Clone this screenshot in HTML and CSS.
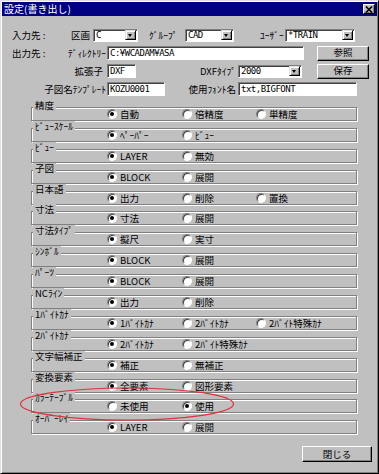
FILE: index.html
```html
<!DOCTYPE html>
<html lang="ja">

<head>
	<meta charset="UTF-8">
	<meta name="viewport" content="width=device-width, initial-scale=1.0">
	<title>設定(書き出し)</title>
	<link rel="stylesheet" href="styles.css">
</head>

<body>
	<div class="dialog">
		<div class="titlebar">
			<span class="title">設定(書き出し)</span>
			<span class="close">
				<svg width="8" height="7" viewBox="0 0 8 7"><path d="M1 0.5 L7 6.5 M7 0.5 L1 6.5" stroke="#000" stroke-width="1.6"/></svg>
			</span>
		</div>

		<div class="form">
			<div class="row">
				<span class="lead">入力先 :</span>
				<span class="lab lab-area">区画</span>
				<span class="combo combo-area"><span class="val">C</span><span class="drop"></span></span>
				<span class="lab lab-group">ｸﾞﾙｰﾌﾟ</span>
				<span class="combo combo-group"><span class="val">CAD</span><span class="drop"></span></span>
				<span class="lab lab-user">ﾕｰｻﾞｰ</span>
				<span class="combo combo-user"><span class="val">*TRAIN</span><span class="drop"></span></span>
			</div>
			<div class="row">
				<span class="lead lead-out">出力先 :</span>
				<span class="lab lab-dir">ﾃﾞｨﾚｸﾄﾘｰ</span>
				<span class="field field-dir">C:¥WCADAM¥ASA</span>
				<button type="button" class="btn btn-side">参照</button>
			</div>
			<div class="row">
				<span class="lab lab-ext">拡張子</span>
				<span class="field field-ext">DXF</span>
				<span class="lab lab-dxf">DXFﾀｲﾌﾟ</span>
				<span class="combo combo-dxf"><span class="val">2000</span><span class="drop"></span></span>
				<button type="button" class="btn btn-side btn-save">保存</button>
			</div>
			<div class="row">
				<span class="lab lab-tpl">子図名ﾃﾝﾌﾟﾚｰﾄ</span>
				<span class="field field-tpl">KOZU0001</span>
				<span class="lab lab-font">使用ﾌｫﾝﾄ名</span>
				<span class="field field-font">txt,BIGFONT</span>
			</div>
		</div>

		<div class="groups">
			<div class="group">
				<span class="group-title">精度</span>
				<div class="opts">
					<span class="opt"><i class="radio on"></i>自動</span>
					<span class="opt"><i class="radio"></i>倍精度</span>
					<span class="opt"><i class="radio"></i>単精度</span>
				</div>
			</div>
			<div class="group">
				<span class="group-title">ﾋﾞｭｰｽｹｰﾙ</span>
				<div class="opts">
					<span class="opt"><i class="radio on"></i>ﾍﾟｰﾊﾟｰ</span>
					<span class="opt"><i class="radio"></i>ﾋﾞｭｰ</span>
				</div>
			</div>
			<div class="group">
				<span class="group-title">ﾋﾞｭｰ</span>
				<div class="opts">
					<span class="opt"><i class="radio on"></i>LAYER</span>
					<span class="opt"><i class="radio"></i>無効</span>
				</div>
			</div>
			<div class="group">
				<span class="group-title">子図</span>
				<div class="opts">
					<span class="opt"><i class="radio on"></i>BLOCK</span>
					<span class="opt"><i class="radio"></i>展開</span>
				</div>
			</div>
			<div class="group">
				<span class="group-title">日本語</span>
				<div class="opts">
					<span class="opt"><i class="radio on"></i>出力</span>
					<span class="opt"><i class="radio"></i>削除</span>
					<span class="opt"><i class="radio"></i>置換</span>
				</div>
			</div>
			<div class="group">
				<span class="group-title">寸法</span>
				<div class="opts">
					<span class="opt"><i class="radio on"></i>寸法</span>
					<span class="opt"><i class="radio"></i>展開</span>
				</div>
			</div>
			<div class="group">
				<span class="group-title">寸法ﾀｲﾌﾟ</span>
				<div class="opts">
					<span class="opt"><i class="radio on"></i>擬尺</span>
					<span class="opt"><i class="radio"></i>実寸</span>
				</div>
			</div>
			<div class="group">
				<span class="group-title">ｼﾝﾎﾞﾙ</span>
				<div class="opts">
					<span class="opt"><i class="radio on"></i>BLOCK</span>
					<span class="opt"><i class="radio"></i>展開</span>
				</div>
			</div>
			<div class="group">
				<span class="group-title">ﾊﾟｰﾂ</span>
				<div class="opts">
					<span class="opt"><i class="radio on"></i>BLOCK</span>
					<span class="opt"><i class="radio"></i>展開</span>
				</div>
			</div>
			<div class="group">
				<span class="group-title">NCﾗｲﾝ</span>
				<div class="opts">
					<span class="opt"><i class="radio on"></i>出力</span>
					<span class="opt"><i class="radio"></i>削除</span>
				</div>
			</div>
			<div class="group">
				<span class="group-title">1ﾊﾞｲﾄｶﾅ</span>
				<div class="opts">
					<span class="opt"><i class="radio on"></i>1ﾊﾞｲﾄｶﾅ</span>
					<span class="opt"><i class="radio"></i>2ﾊﾞｲﾄｶﾅ</span>
					<span class="opt"><i class="radio"></i>2ﾊﾞｲﾄ特殊ｶﾅ</span>
				</div>
			</div>
			<div class="group">
				<span class="group-title">2ﾊﾞｲﾄｶﾅ</span>
				<div class="opts">
					<span class="opt"><i class="radio on"></i>2ﾊﾞｲﾄｶﾅ</span>
					<span class="opt"><i class="radio"></i>2ﾊﾞｲﾄ特殊ｶﾅ</span>
				</div>
			</div>
			<div class="group">
				<span class="group-title">文字幅補正</span>
				<div class="opts">
					<span class="opt"><i class="radio on"></i>補正</span>
					<span class="opt"><i class="radio"></i>無補正</span>
				</div>
			</div>
			<div class="group">
				<span class="group-title">変換要素</span>
				<div class="opts">
					<span class="opt"><i class="radio on"></i>全要素</span>
					<span class="opt"><i class="radio"></i>図形要素</span>
				</div>
			</div>
			<div class="group">
				<span class="group-title">ｶﾗｰﾃｰﾌﾞﾙ</span>
				<div class="opts">
					<span class="opt"><i class="radio"></i>未使用</span>
					<span class="opt"><i class="radio on"></i>使用</span>
				</div>
			</div>
			<div class="group">
				<span class="group-title">ｵｰﾊﾞｰﾚｲ</span>
				<div class="opts">
					<span class="opt"><i class="radio on"></i>LAYER</span>
					<span class="opt"><i class="radio"></i>展開</span>
				</div>
			</div>
		</div>

		<div class="footer">
			<button type="button" class="btn btn-close">閉じる</button>
		</div>

		<svg class="mark" width="216" height="36" viewBox="0 0 216 36">
			<ellipse cx="108" cy="18" rx="106.5" ry="16" fill="none" stroke="#e0303a" stroke-width="1.2"/>
		</svg>
	</div>
</body>

</html>
```

FILE: styles.css
```css
*,
*::before,
*::after {
	box-sizing: border-box;
}

body {
	margin: 0;
	background-color: #c0c0c0;
	font-family: "Noto Sans CJK JP", "Noto Sans", sans-serif;
	font-size: 9.5px;
	color: #000000;
}

.dialog {
	position: relative;
	width: 379px;
	height: 474px;
	background-color: #c0c0c0;
	border: 1px solid;
	border-color: #dfdfdf #000000 #000000 #dfdfdf;
	box-shadow: inset 1px 1px 0 #ffffff, inset -1px -1px 0 #808080;
	padding: 1px;
	overflow: hidden;
}

.titlebar {
	display: flex;
	align-items: center;
	justify-content: space-between;
	height: 14px;
	background-color: #000080;
	color: #ffffff;
	padding: 0 2px 0 2px;
}

.title {
	font-size: 10px;
	line-height: 14px;
	white-space: nowrap;
}

.close {
	display: flex;
	align-items: center;
	justify-content: center;
	width: 12px;
	height: 10px;
	background-color: #c0c0c0;
	border: 1px solid;
	border-color: #ffffff #000000 #000000 #ffffff;
	box-shadow: inset -1px -1px 0 #808080;
}

.form {
	display: flex;
	flex-direction: column;
	gap: 4px;
	padding: 12px 0 0 10px;
}

.row {
	display: flex;
	align-items: center;
	height: 14px;
	white-space: nowrap;
}

.lead {
	width: 58px;
}

.lead-out {
	width: 50px;
}

.lab {
	text-align: right;
	flex: none;
}

.lab-area {
	width: 20px;
	margin-right: 3px;
}

.lab-group {
	width: 31px;
	margin-left: 11px;
	margin-right: 5px;
	text-align: left;
}

.lab-user {
	width: 24px;
	margin-left: 26px;
	margin-right: 1px;
	text-align: left;
}

.lab-dir {
	width: 44px;
	margin-right: 1px;
}

.lab-ext {
	width: 91px;
	margin-right: 4px;
}

.lab-dxf {
	width: 100px;
	margin-right: 2px;
}

.lab-tpl {
	width: 94px;
	margin-right: 1px;
}

.lab-font {
	width: 71px;
	margin-right: 2px;
}

.field,
.combo {
	display: flex;
	align-items: center;
	height: 14px;
	background-color: #ffffff;
	border: 1px solid;
	border-color: #808080 #ffffff #ffffff #808080;
	box-shadow: inset 1px 1px 0 #404040;
	font-family: "DejaVu Sans Mono", "Liberation Mono", monospace;
	font-size: 9px;
	letter-spacing: -0.5px;
	padding-left: 2px;
	flex: none;
}

.combo {
	height: 13px;
	padding-right: 1px;
}

.val {
	flex: 1;
}

.drop {
	position: relative;
	width: 11px;
	height: 10px;
	background-color: #c0c0c0;
	border: 1px solid;
	border-color: #dfdfdf #000000 #000000 #dfdfdf;
	box-shadow: inset 1px 1px 0 #ffffff, inset -1px -1px 0 #808080;
}

.drop::after {
	content: '';
	position: absolute;
	top: 3px;
	left: 2px;
	border-left: 2.5px solid transparent;
	border-right: 2.5px solid transparent;
	border-top: 3px solid #000000;
}

.combo-area {
	width: 45px;
}

.combo-group {
	width: 49px;
}

.combo-user {
	width: 70px;
}

.combo-dxf {
	width: 64px;
}

.field-dir {
	width: 197px;
}

.field-ext {
	width: 29px;
}

.field-tpl {
	width: 58px;
}

.field-font {
	width: 119px;
}

.btn {
	font-family: inherit;
	font-size: 9.5px;
	color: #000000;
	background-color: #c0c0c0;
	border: 1px solid;
	border-color: #ffffff #000000 #000000 #ffffff;
	box-shadow: inset -1px -1px 0 #808080;
	padding: 0;
	line-height: 1;
}

.btn-side {
	width: 52px;
	height: 15px;
	margin-left: 13px;
}

.btn-save {
	margin-left: 15px;
}

.groups {
	display: flex;
	flex-direction: column;
	gap: 6.9px;
	margin: 11px 0 0 29px;
	width: 326px;
}

.group {
	position: relative;
	height: 14px;
	border: 1px solid #808080;
	box-shadow: 1px 1px 0 #ffffff, inset 1px 1px 0 #ffffff;
}

.group-title {
	position: absolute;
	top: -8px;
	left: 1px;
	padding: 0 2px;
	background-color: #c0c0c0;
	line-height: 10px;
	white-space: nowrap;
}

.opts {
	display: grid;
	grid-template-columns: 75px 74px auto;
	align-items: center;
	height: 12px;
	padding-left: 75px;
}

.opt {
	display: flex;
	align-items: center;
	gap: 3px;
	white-space: nowrap;
	line-height: 12px;
}

.radio {
	position: relative;
	display: block;
	width: 10px;
	height: 10px;
	border-radius: 50%;
	background-color: #ffffff;
	border: 1px solid;
	border-color: #808080 #ffffff #ffffff #808080;
	box-shadow: inset 1px 1px 0 #404040;
}

.radio.on::after {
	content: '';
	position: absolute;
	top: 2px;
	left: 2px;
	width: 4px;
	height: 4px;
	border-radius: 50%;
	background-color: #000000;
}

.footer {
	display: flex;
	justify-content: flex-end;
	margin-top: 12px;
	padding-right: 5px;
}

.btn-close {
	width: 70px;
	height: 16px;
}

.mark {
	position: absolute;
	top: 385px;
	left: 18px;
	pointer-events: none;
}
```
